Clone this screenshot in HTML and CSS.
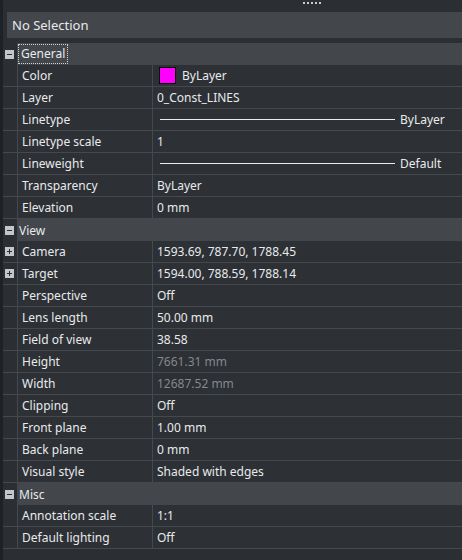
FILE: index.html
```html
<!DOCTYPE html>
<html lang="en">
<head>
  <meta charset="UTF-8">
  <title>Properties</title>
  <link rel="stylesheet" href="styles.css">
</head>
<body>
  <div class="palette">
    <div class="grip"><span></span><span></span><span></span><span></span><span></span></div>
    <div class="selection">No Selection</div>

    <div class="grid">
      <!-- General -->
      <div class="group">
        <span class="toggle minus"></span>
        <div class="group-title"><span class="focus">General</span></div>
      </div>
      <div class="row">
        <span class="gutter"></span>
        <div class="label">Color</div>
        <div class="value"><span class="swatch"></span>ByLayer</div>
      </div>
      <div class="row">
        <span class="gutter"></span>
        <div class="label">Layer</div>
        <div class="value">0_Const_LINES</div>
      </div>
      <div class="row">
        <span class="gutter"></span>
        <div class="label">Linetype</div>
        <div class="value line"><span class="stroke"></span><span class="line-name">ByLayer</span></div>
      </div>
      <div class="row">
        <span class="gutter"></span>
        <div class="label">Linetype scale</div>
        <div class="value">1</div>
      </div>
      <div class="row">
        <span class="gutter"></span>
        <div class="label">Lineweight</div>
        <div class="value line"><span class="stroke"></span><span class="line-name">Default</span></div>
      </div>
      <div class="row">
        <span class="gutter"></span>
        <div class="label">Transparency</div>
        <div class="value">ByLayer</div>
      </div>
      <div class="row">
        <span class="gutter"></span>
        <div class="label">Elevation</div>
        <div class="value">0 mm</div>
      </div>

      <!-- View -->
      <div class="group">
        <span class="toggle minus"></span>
        <div class="group-title">View</div>
      </div>
      <div class="row">
        <span class="gutter"><span class="toggle plus"></span></span>
        <div class="label">Camera</div>
        <div class="value">1593.69, 787.70, 1788.45</div>
      </div>
      <div class="row">
        <span class="gutter"><span class="toggle plus"></span></span>
        <div class="label">Target</div>
        <div class="value">1594.00, 788.59, 1788.14</div>
      </div>
      <div class="row">
        <span class="gutter"></span>
        <div class="label">Perspective</div>
        <div class="value">Off</div>
      </div>
      <div class="row">
        <span class="gutter"></span>
        <div class="label">Lens length</div>
        <div class="value">50.00 mm</div>
      </div>
      <div class="row">
        <span class="gutter"></span>
        <div class="label">Field of view</div>
        <div class="value">38.58</div>
      </div>
      <div class="row">
        <span class="gutter"></span>
        <div class="label">Height</div>
        <div class="value muted">7661.31 mm</div>
      </div>
      <div class="row">
        <span class="gutter"></span>
        <div class="label">Width</div>
        <div class="value muted">12687.52 mm</div>
      </div>
      <div class="row">
        <span class="gutter"></span>
        <div class="label">Clipping</div>
        <div class="value">Off</div>
      </div>
      <div class="row">
        <span class="gutter"></span>
        <div class="label">Front plane</div>
        <div class="value">1.00 mm</div>
      </div>
      <div class="row">
        <span class="gutter"></span>
        <div class="label">Back plane</div>
        <div class="value">0 mm</div>
      </div>
      <div class="row">
        <span class="gutter"></span>
        <div class="label">Visual style</div>
        <div class="value">Shaded with edges</div>
      </div>

      <!-- Misc -->
      <div class="group">
        <span class="toggle minus"></span>
        <div class="group-title">Misc</div>
      </div>
      <div class="row">
        <span class="gutter"></span>
        <div class="label">Annotation scale</div>
        <div class="value">1:1</div>
      </div>
      <div class="row">
        <span class="gutter"></span>
        <div class="label">Default lighting</div>
        <div class="value">Off</div>
      </div>
    </div>
  </div>
</body>
</html>
```

FILE: styles.css
```css
/* Page */
body {
  margin: 0;
  width: 462px;
  height: 560px;
  overflow: hidden;
  background-color: #2b2e33;
  color: #e8eaec;
  font-family: "Noto Sans", sans-serif;
  font-size: 12px;
}

/* Palette frame with the dark left edge */
.palette {
  height: 560px;
  border-left: 3px solid #1e2125;
  box-sizing: border-box;
}

/* Drag grip at the top */
.grip {
  display: flex;
  gap: 2px;
  height: 12px;
  padding: 2px 0 0 300px;
  box-sizing: border-box;
}
.grip span {
  width: 2px;
  height: 2px;
  background-color: #c9cbce;
}

/* Current selection box */
.selection {
  height: 26px;
  margin: 0 0 5px 4px;
  padding-left: 5px;
  display: flex;
  align-items: center;
  background-color: #43464b;
  font-size: 13px;
}

/* Property grid */
.grid {
  display: flex;
  flex-direction: column;
}

.group, .row {
  display: grid;
  grid-template-columns: 14px 136px 1fr;
  height: 22px;
  box-sizing: border-box;
}

.group .group-title {
  grid-column: 2 / 4;
  display: flex;
  align-items: center;
  padding-left: 2px;
  background-color: #43464b;
}
.group .toggle {
  align-self: center;
  margin-left: 2px;
}

.focus {
  outline: 1px dotted #cfd1d4;
  outline-offset: 0;
  padding: 1px 2px;
  line-height: 16px;
}

.row {
  border-bottom: 1px solid #45484d;
  background-color: #2d3035;
}
.row .gutter {
  background-color: #2b2e33;
  display: flex;
  align-items: center;
  padding-left: 2px;
}

.label, .value {
  display: flex;
  align-items: center;
  white-space: nowrap;
  overflow: hidden;
}
.label {
  padding-left: 4px;
  border-left: 1px solid #45484d;
  border-right: 1px solid #45484d;
}
.value {
  padding-left: 4px;
}
.value.muted {
  color: #85888c;
}

/* Expand / collapse boxes */
.toggle {
  position: relative;
  width: 9px;
  height: 9px;
  background-color: #c3c6ca;
}
.toggle::before {
  content: "";
  position: absolute;
  left: 2px;
  top: 4px;
  width: 5px;
  height: 1px;
  background-color: #2b2e33;
}
.toggle.plus::after {
  content: "";
  position: absolute;
  left: 4px;
  top: 2px;
  width: 1px;
  height: 5px;
  background-color: #2b2e33;
}

/* Colour swatch */
.swatch {
  width: 15px;
  height: 15px;
  margin: 0 6px 0 2px;
  background-color: #ff00ff;
  border: 1px solid #000;
}

/* Linetype preview */
.value.line {
  padding-right: 16px;
}
.stroke {
  flex: 1;
  height: 1px;
  margin: 0 5px 0 3px;
  background-color: #e8eaec;
}
.line-name {
  width: 46px;
}
```
